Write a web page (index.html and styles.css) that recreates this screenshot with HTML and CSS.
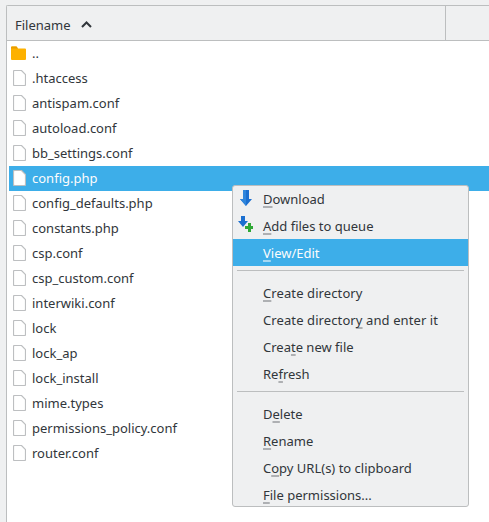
FILE: index.html
```html
<!DOCTYPE html>
<html lang="en">
<head>
  <meta charset="UTF-8" />
  <title>Remote files</title>
  <link rel="stylesheet" href="styles.css">
</head>
<body>
  <svg class="icon-defs" width="0" height="0">
    <symbol id="file-icon" viewBox="0 0 13 16">
      <path d="M1.5 .5H8.5L12.5 4.5V14.5Q12.5 15.5 11.5 15.5H1.5Q.5 15.5 .5 14.5V1.5Q.5 .5 1.5 .5Z" fill="#fff" stroke="#bdbfc1" stroke-width="1.2"/>
    </symbol>
    <symbol id="arrow-icon" viewBox="0 0 12 16">
      <path d="M3 0H9V9H12L6 16L0 9H3Z" fill="#1b6fd0"/>
      <path d="M3 0H6V16L0 9H3Z" fill="#2f86dc"/>
    </symbol>
  </svg>

  <div class="panel">
    <div class="header">
      <div class="col-name">
        <span>Filename</span>
        <svg class="sort" width="11" height="7" viewBox="0 0 11 7"><path d="M1 6L5.5 1.5L10 6" fill="none" stroke="#31363b" stroke-width="2"/></svg>
      </div>
      <div class="col-rest"></div>
    </div>
    <ul class="files">
      <li>
        <svg class="folder" width="15" height="14" viewBox="0 0 15 14">
          <path d="M0 1.5Q0 .5 1 .5H5.5L7 2.5H14Q15 2.5 15 3.5V13Q15 14 14 14H1Q0 14 0 13Z" fill="#fdb100"/>
          <path d="M0 1.5Q0 .5 1 .5H5.5L7 2.5H0Z" fill="#e89d00"/>
        </svg>
        <span>..</span>
      </li>
      <li><svg class="file"><use href="#file-icon"/></svg>.htaccess</li>
      <li><svg class="file"><use href="#file-icon"/></svg>antispam.conf</li>
      <li><svg class="file"><use href="#file-icon"/></svg>autoload.conf</li>
      <li><svg class="file"><use href="#file-icon"/></svg>bb_settings.conf</li>
      <li class="selected"><svg class="file"><use href="#file-icon"/></svg>config.php</li>
      <li><svg class="file"><use href="#file-icon"/></svg>config_defaults.php</li>
      <li><svg class="file"><use href="#file-icon"/></svg>constants.php</li>
      <li><svg class="file"><use href="#file-icon"/></svg>csp.conf</li>
      <li><svg class="file"><use href="#file-icon"/></svg>csp_custom.conf</li>
      <li><svg class="file"><use href="#file-icon"/></svg>interwiki.conf</li>
      <li><svg class="file"><use href="#file-icon"/></svg>lock</li>
      <li><svg class="file"><use href="#file-icon"/></svg>lock_ap</li>
      <li><svg class="file"><use href="#file-icon"/></svg>lock_install</li>
      <li><svg class="file"><use href="#file-icon"/></svg>mime.types</li>
      <li><svg class="file"><use href="#file-icon"/></svg>permissions_policy.conf</li>
      <li><svg class="file"><use href="#file-icon"/></svg>router.conf</li>
    </ul>
  </div>

  <!-- Context menu -->
  <div class="menu">
    <div class="item first">
      <svg class="item-icon" width="12" height="16"><use href="#arrow-icon"/></svg>
      <span><u>D</u>ownload</span>
    </div>
    <div class="item">
      <svg class="item-icon queue" width="15" height="16" viewBox="0 0 15 16">
        <path d="M3 0H7V5H10L5 11L0 5H3Z" fill="#1b6fd0"/>
        <path d="M10 7H13V10H15V13H13V16H10V13H7V10H10Z" fill="#2fa836"/>
      </svg>
      <span><u>A</u>dd files to queue</span>
    </div>
    <div class="item active"><span><u>V</u>iew/Edit</span></div>
    <div class="sep"></div>
    <div class="item"><span class="wide"><u>C</u>reate directory</span></div>
    <div class="item"><span class="wide">Create director<u>y</u> and enter it</span></div>
    <div class="item"><span>Crea<u>t</u>e new file</span></div>
    <div class="item"><span>Re<u>f</u>resh</span></div>
    <div class="sep"></div>
    <div class="item"><span>D<u>e</u>lete</span></div>
    <div class="item"><span><u>R</u>ename</span></div>
    <div class="item"><span>C<u>o</u>py URL(s) to clipboard</span></div>
    <div class="item last"><span><u>F</u>ile permissions...</span></div>
  </div>
</body>
</html>
```

FILE: styles.css
```css
/* Base Styles */
html, body {
  height: 100%;
}

body {
  margin: 0;
  padding: 5px 0 0 6px;
  box-sizing: border-box;
  background: #eff0f1;
  font-family: "Noto Sans", sans-serif;
  font-size: 13px;
  color: #31363b;
  overflow: hidden;
}

.icon-defs {
  position: absolute;
}

.panel {
  height: 100%;
  background: #fff;
  border-top: 1px solid #bcbebf;
  border-left: 1px solid #bcbebf;
  border-top-left-radius: 2px;
}

/* Header */
.header {
  display: flex;
  height: 34px;
  background: #eff0f1;
  border-bottom: 1px solid #bcbebf;
}

.col-name {
  width: 439px;
  box-sizing: border-box;
  padding: 3px 0 0 8px;
  display: flex;
  align-items: center;
  gap: 10px;
  border-right: 1px solid #bcbebf;
}

.sort {
  margin-top: -1px;
}

.col-rest {
  flex: 1;
}

/* File list */
.files {
  list-style: none;
  margin: 0;
  padding: 0 0 0 2px;
}

.files li {
  height: 25px;
  box-sizing: border-box;
  display: flex;
  align-items: center;
  padding: 0 0 2px 23px;
  position: relative;
}

.files li.selected {
  background: #3daee9;
  color: #fcfcfc;
}

.file {
  position: absolute;
  left: 4px;
  top: 4px;
  width: 13px;
  height: 16px;
}

.folder {
  position: absolute;
  left: 2px;
  top: 5px;
}

/* Context menu */
.menu {
  position: absolute;
  left: 232px;
  top: 185px;
  width: 237px;
  box-sizing: border-box;
  background: #eff0f1;
  border: 1px solid #bcbebf;
  border-radius: 3px;
}

.item {
  height: 27px;
  display: flex;
  align-items: center;
  padding-left: 30px;
  position: relative;
}

.item.first {
  height: 26px;
}

.item.last {
  height: 25px;
  padding-top: 3px;
  box-sizing: border-box;
}

.item.active {
  background: #3daee9;
  color: #fcfcfc;
}

.item u {
  text-decoration-thickness: 2px;
  text-underline-offset: 2px;
  text-decoration-skip-ink: none;
  text-decoration-color: rgba(120, 124, 128, 0.55);
}

.item.active u {
  text-decoration-color: rgba(252, 252, 252, 0.55);
}

.wide {
  letter-spacing: 0.1px;
}

.item-icon {
  position: absolute;
  left: 7px;
  top: 4px;
}

.item-icon.queue {
  left: 5px;
  top: 4px;
}

.sep {
  height: 1px;
  margin: 4px 4px 8px;
  background: #bcbebf;
}
```
